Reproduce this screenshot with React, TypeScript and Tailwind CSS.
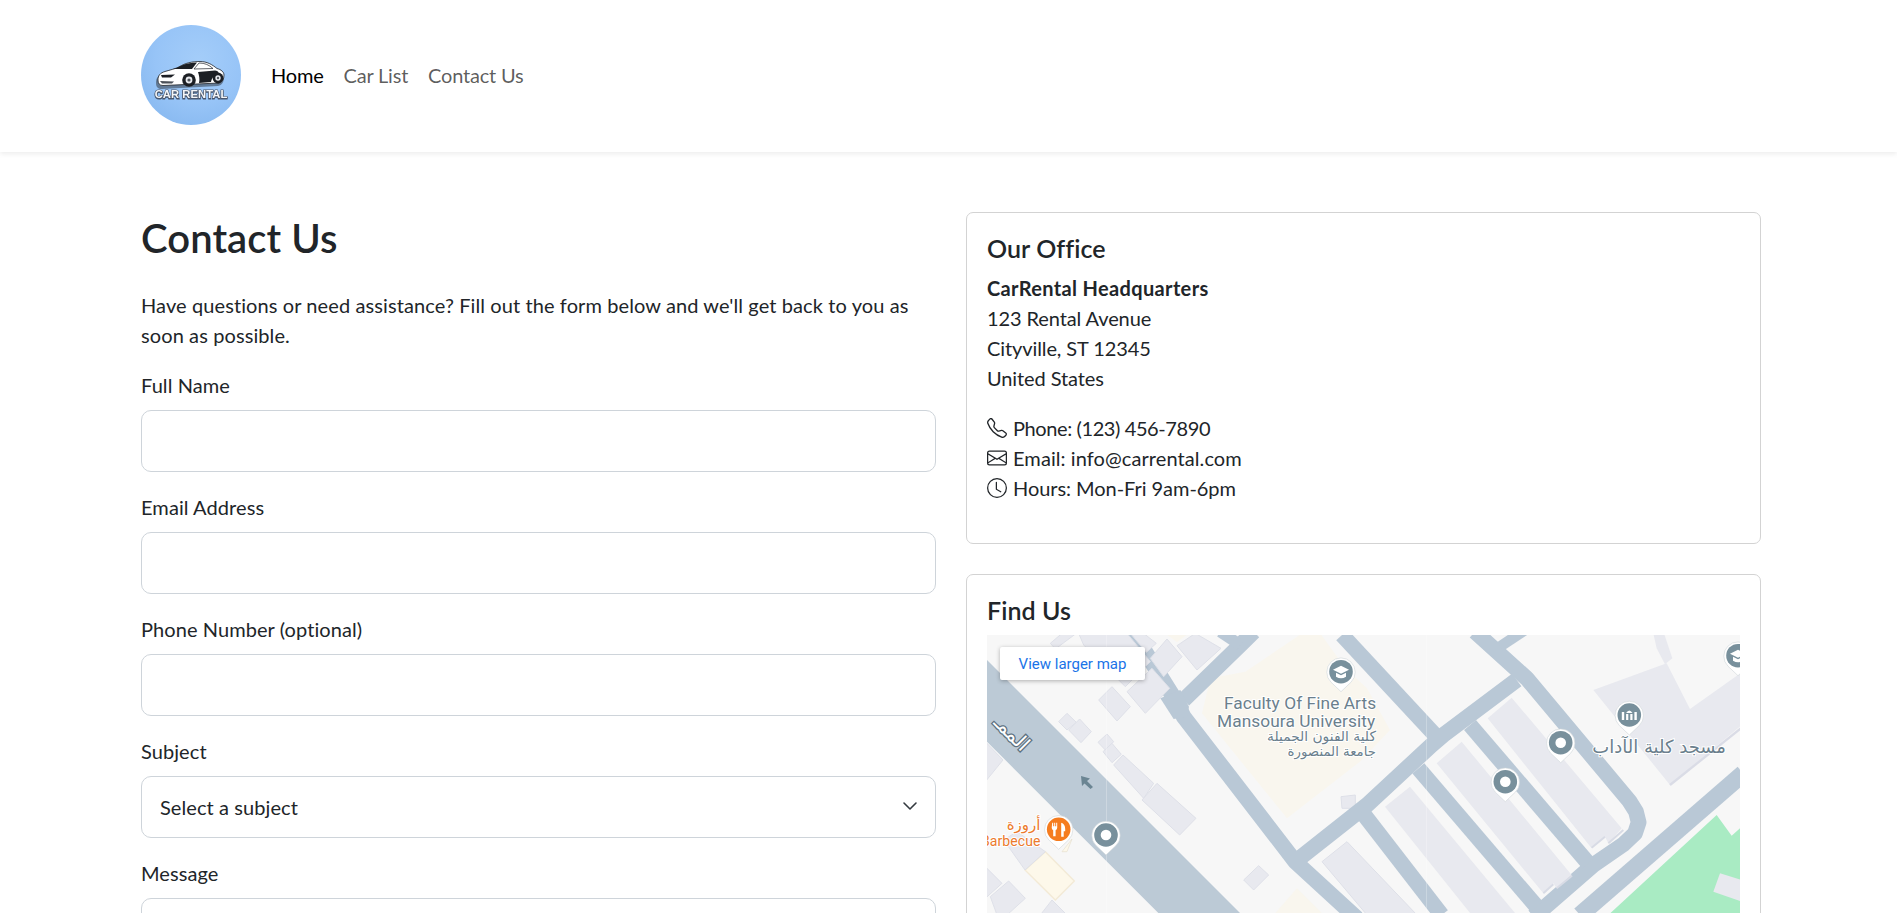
import React from "react";
import { BsTelephone, BsEnvelope, BsClock } from "react-icons/bs";

const poly = (pts: number[][]) => pts.map((p) => p.join(",")).join(" ");

const B8: number[][][] = [
  [[190, 25], [225, -5], [268, -5], [205, 42]],
  [[275, -5], [420, -5], [490, 80], [415, 155], [290, 30]],
  [[420, 170], [495, 100], [548, 160], [475, 235]],
  [[490, 70], [540, 12], [585, 65], [530, 125]],
  [[570, 32], [625, -5], [702, 40], [630, 105]],
  [[430, -5], [470, -5], [508, 25], [478, 52]],
  [[335, 195], [375, 155], [430, 215], [390, 258]],
  [[215, 260], [240, 235], [268, 262], [240, 285]],
  [[245, 285], [278, 252], [313, 290], [282, 323]],
  [[333, 322], [360, 297], [380, 320], [355, 345]],
  [[348, 350], [375, 325], [403, 358], [375, 383]],
  [[380, 390], [408, 360], [500, 445], [470, 490]],
  [[465, 495], [510, 445], [627, 550], [578, 600]],
  [[770, 735], [815, 692], [845, 720], [800, 765]],
  [[1062, 485], [1105, 480], [1105, 520], [1065, 520]],
  [[-5, 320], [48, 375], [-5, 440]],
  [[-5, 695], [45, 745], [-5, 790]],
  [[10, 785], [65, 738], [115, 790], [60, 840], [30, 840]],
  [[160, 840], [195, 795], [240, 840]],
  [[50, 615], [90, 590], [175, 650], [114, 705]],
  [[1005, 680], [1080, 620], [1290, 840], [1140, 840]],
];

const B9: number[][][] = [
  [[383, 250], [455, 188], [785, 580], [745, 625], [735, 605], [695, 640]],
  [[230, 385], [305, 320], [635, 720], [590, 760], [580, 745], [550, 775]],
  [[75, 515], [150, 455], [470, 840], [335, 840]],
  [[700, 165], [920, 85], [990, 222], [1145, 112], [1145, 270], [930, 450]],
  [[880, -5], [912, -5], [937, 70], [915, 88], [890, 40]],
  [[1060, 770], [1080, 715], [1145, 735], [1145, 800]],
];

const R8: number[][][] = [
  [[437, -10], [565, 195], [590, 245], [925, 680], [1110, 850]],
  [[590, 195], [760, 30], [800, -10]],
  [[700, -10], [760, 30]],
];

const R9: number[][][] = [
  [[-54, 0], [225, 300]],
  [[345, -10], [500, 130], [808, 498], [828, 530], [836, 562], [825, 595], [790, 628], [700, 690], [545, 825], [520, 845]],
  [[-194, 680], [21, 510], [215, 330], [250, 300], [470, 135]],
  [[330, 270], [685, 685]],
  [[175, 400], [530, 815]],
  [[5, 530], [245, 840]],
  [[660, 840], [1150, 415]],
];

function Pin({ x, y, fill = "#78909c", children }: { x: number; y: number; fill?: string; children?: React.ReactNode }) {
  return (
    <g transform={`translate(${x},${y})`}>
      <path d="M0,20 L-10,10.5 A14.2,14.2 0 1 1 10,10.5 Z" fill="#ffffff" stroke="#cfd5d9" strokeWidth="0.6" />
      <circle r="11.8" fill={fill} />
      {children ?? <circle r="5.3" fill="#ffffff" />}
    </g>
  );
}

const Cap = () => (
  <g fill="#ffffff">
    <path d="M-8,-2 L0,-6 L8,-2 L0,2 Z" />
    <path d="M-5,1 L0,3.5 L5,1 L5,5 Q0,8 -5,5 Z" />
  </g>
);

function MapArt() {
  return (
    <svg viewBox="0 0 753 450" width="753" height="450" className="block">
      <rect width="753" height="450" fill="#f7f7f7" />
      <g transform="scale(0.33333)">
        <polygon fill="#f9f6ee" points={poly([[645, 235], [670, 130], [775, 110], [945, -5], [1000, -5], [1075, 100], [1140, 160], [1209, 285], [1119, 380], [900, 550]])} />
        <polygon fill="#f9f6ee" points={poly([[860, 840], [930, 760], [1010, 840]])} />
        <polygon fill="#f9f6ee" points={poly([[535, -5], [570, 22], [605, -5]])} />
        <polygon fill="#fdf8ea" stroke="#f3ead6" strokeWidth="4" points={poly([[114, 705], [175, 650], [262, 738], [205, 795]])} />
        <polygon fill="#fdf8ea" stroke="#e6dfcf" strokeWidth="2" points={poly([[225, 650], [255, 612], [240, 650]])} />
        <polygon fill="#bccad6" points={poly([[-10, 65], [1285, 1360], [1040, 1360], [-10, 310]])} />
        {R8.map((r, i) => (
          <polyline key={i} points={poly(r)} fill="none" stroke="#b9c8d6" strokeWidth={i === 2 ? 34 : 47} strokeLinejoin="round" />
        ))}
        <polygon fill="#b9c8d6" points={poly([[520, 190], [580, 165], [606, 215], [600, 245], [560, 252]])} />
        {B8.map((p, i) => (
          <polygon key={i} points={poly(p)} fill="#e8e9ef" stroke="#dee0e8" strokeWidth="3" />
        ))}
      </g>
      <g transform="translate(373,0) scale(0.33333)">
        <polygon fill="#a9ebc3" points={poly([[745, 840], [1070, 540], [1115, 602], [1145, 575], [1145, 840]])} />
        {R9.map((r, i) => (
          <polyline key={i} points={poly(r)} fill="none" stroke="#b9c8d6" strokeWidth={i === 6 ? 52 : 47} strokeLinejoin="round" />
        ))}
        <polyline points={poly([[420, 35], [495, -15]])} fill="none" stroke="#b9c8d6" strokeWidth="32" />
        {B9.map((p, i) => (
          <polygon key={i} points={poly(p)} fill="#e8e9ef" />
        ))}
        <polyline points={poly([[930, 450], [1145, 278]])} fill="none" stroke="#dadce6" strokeWidth="7" />
        <polyline points={poly([[695, 638], [735, 605]])} fill="none" stroke="#d8dbe5" strokeWidth="6" />
        <polyline points={poly([[745, 625], [790, 585]])} fill="none" stroke="#d8dbe5" strokeWidth="6" />
        <polyline points={poly([[550, 775], [580, 748]])} fill="none" stroke="#d8dbe5" strokeWidth="6" />
        <polyline points={poly([[590, 760], [636, 722]])} fill="none" stroke="#d8dbe5" strokeWidth="6" />
      </g>
      <line x1="119.5" y1="0" x2="119.5" y2="450" stroke="#ffffff" strokeOpacity="0.25" strokeWidth="1" />
      <line x1="439.5" y1="0" x2="439.5" y2="450" stroke="#ffffff" strokeOpacity="0.25" strokeWidth="1" />

      <g fill="#6b7f8d" stroke="#ffffff" strokeWidth="2" className="font-['Roboto'] [paint-order:stroke]">
        <text x="237" y="74" fontSize="17.3">Faculty Of Fine Arts</text>
        <text x="230" y="92" fontSize="17.3">Mansoura University</text>
      </g>
      <g fill="#6b7f8d" stroke="#ffffff" strokeWidth="2" textAnchor="end" className="font-['DejaVu_Sans'] [paint-order:stroke]">
        <text x="389" y="106" fontSize="13.8">كلية الفنون الجميلة</text>
        <text x="389" y="120.5" fontSize="13.3">جامعة المنصورة</text>
        <text x="739" y="118" fontSize="18">مسجد كلية الآداب</text>
      </g>
      <g fill="#ec7a2c" stroke="#ffffff" strokeWidth="2" textAnchor="end" className="[paint-order:stroke]">
        <text x="53.5" y="195" fontSize="15" className="font-['DejaVu_Sans']">أروزة</text>
        <text x="53.5" y="211" fontSize="14" className="font-['Roboto']">Barbecue</text>
      </g>
      <text transform="translate(20,103) rotate(45)" textAnchor="middle" fontSize="20" fill="#ffffff" stroke="#5d7080" strokeWidth="2.6" className="font-['DejaVu_Sans'] [paint-order:stroke]">الممـ</text>
      <path d="M94,141 L103,143.5 L100,146 L106,152 L103.5,154 L97.5,148.5 L95,151 Z" fill="#6b8593" />

      <Pin x={119} y={200} />
      <Pin x={573.7} y={107.7} />
      <Pin x={518.3} y={146.7} />
      <Pin x={354} y={36.7}><Cap /></Pin>
      <Pin x={751} y={20.7}><Cap /></Pin>
      <Pin x={642.3} y={80}>
        <g fill="#ffffff">
          <rect x="-7.5" y="-3" width="2.4" height="8" />
          <rect x="5.1" y="-3" width="2.4" height="8" />
          <rect x="-3.2" y="-1" width="2.2" height="6" />
          <rect x="1" y="-1" width="2.2" height="6" />
          <path d="M-3.2,-2 Q0,-7 3.2,-2 Z" />
        </g>
      </Pin>
      <Pin x={71.7} y={194.3} fill="#f57c1f">
        <g fill="#ffffff">
          <path d="M-6.5,-6.5 h1 v3.5 h1 v-3.5 h1 v3.5 h1 v-3.5 h1 v5 q0,2 -1.6,2.4 v6.1 h-2.4 v-6.1 q-1.5,-.4 -1.5,-2.4 Z" />
          <path d="M2.5,7.5 V-6.5 Q6.5,-5.5 6.5,0 V2 H5 V7.5 Z" />
        </g>
      </Pin>
    </svg>
  );
}

function Logo() {
  return (
    <div className="w-[100px] h-[100px] rounded-full shrink-0 overflow-hidden bg-[radial-gradient(circle_at_58%_35%,#a4cdf9_0%,#97c4f7_50%,#80b3ec_100%)]">
      <svg viewBox="0 0 100 100" width="100" height="100">
        <path d="M16,56 C16,51 18,48 24,46.5 C29,45 35,43.5 38,42 C44,38 51,36.5 59,36.5 C66,36.5 71,39.5 76,43.5 C81,44.5 84,47 84,50 C84,55 82,58 78,59 L22,62 C18,62 16,60 16,56 Z" fill="#4a5a6c" fillOpacity="0.7" transform="translate(-1,2)" />
        <path d="M17,55 C17,50.5 19,48 24,46.5 C29,45 35,43.5 38,42 C44,38 51,36.5 59,36.5 C66,36.5 71,39.5 76,43.5 C80,44.5 83,47 83,50 C83,54 81.5,57 78,58 L22,60.5 C18.5,60.5 17,58.5 17,55 Z" fill="#ffffff" stroke="#1f2329" strokeWidth="0.8" />
        <path d="M32,44 C38,42.5 41,39.5 47,38.5 C50,38 53,37.5 56,37.5 L51,44 Z" fill="#1c1f24" />
        <path d="M53,44 L58,38 C64,38 68,40 72,43.5 Z" fill="#ffffff" stroke="#1f2329" strokeWidth="0.7" />
        <path d="M57,47 L74,45.5 C78,46 78,48 77,50 C74,50 71,52 70,57 L58,58 C59,54 58,50 57,47 Z" fill="#1c1f24" />
        <path d="M20,50 L34,49.5 L30,52.5 L21,52.5 Z" fill="#1c1f24" />
        <path d="M19,56 L33,56.5 L31,58.5 L21,58.5 Z" fill="#4b5058" />
        <circle cx="48" cy="55" r="6.8" fill="#1c1f24" />
        <circle cx="48" cy="55" r="3.4" fill="#e8eaee" />
        <circle cx="48" cy="55" r="1.6" fill="#50555c" />
        <circle cx="77" cy="53" r="5.4" fill="#1c1f24" />
        <circle cx="77" cy="53" r="2.7" fill="#e8eaee" />
        <circle cx="77" cy="53" r="1.2" fill="#50555c" />
        <text x="50" y="72.5" textAnchor="middle" fontSize="11.2" fontWeight="700" fill="#f4f6f8" stroke="#4a5568" strokeWidth="1.2" className="font-['Liberation_Sans'] [paint-order:stroke] drop-shadow-[0_1px_0_rgba(50,60,80,0.8)]">CAR RENTAL</text>
      </svg>
    </div>
  );
}

function Field({ label, type = "text" }: { label: string; type?: string }) {
  return (
    <div className="mb-5">
      <label className="block mb-2.5 h-[30px]">{label}</label>
      <input type={type} className="block w-full h-[62px] bg-white border border-[#ced4da] rounded-[10px] px-[18px] outline-none" />
    </div>
  );
}

export default function App() {
  return (
    <div className="h-screen overflow-hidden bg-white text-[#212529] text-[20px] leading-[30px] font-['Lato'] tracking-[0.08px]">
      <header className="h-[152px] bg-white shadow-[0_2px_5px_rgba(0,0,0,0.075)]">
        <nav className="ml-[141px] w-[1620px] h-full flex items-center pb-[2px]">
          <Logo />
          <ul className="flex ml-5 tracking-[-0.2px]">
            <li className="px-2.5 text-black">Home</li>
            <li className="px-2.5 text-black/65">Car List</li>
            <li className="px-2.5 text-black/65">Contact Us</li>
          </ul>
        </nav>
      </header>

      <main className="ml-[141px] w-[1620px] mt-[60px] grid grid-cols-2 gap-[30px]">
        <section>
          <h1 className="text-[40px] leading-[52px] font-semibold mb-[26px]">Contact Us</h1>
          <p className="mb-5 tracking-[0.1px]">Have questions or need assistance? Fill out the form below and we'll get back to you as soon as possible.</p>
          <form>
            <Field label="Full Name" />
            <Field label="Email Address" type="email" />
            <Field label="Phone Number (optional)" type="tel" />
            <div className="mb-5">
              <label className="block mb-2.5 h-[30px]">Subject</label>
              <div className="relative">
                <select defaultValue="" className="block w-full h-[62px] appearance-none bg-white border border-[#ced4da] rounded-[10px] pl-[18px] pr-12 outline-none">
                  <option value="">Select a subject</option>
                </select>
                <svg viewBox="0 0 16 16" width="16" height="16" className="absolute right-[18px] top-[22px] pointer-events-none">
                  <path d="m2 5 6 6 6-6" fill="none" stroke="#343a40" strokeWidth="1.6" strokeLinecap="round" strokeLinejoin="round" />
                </svg>
              </div>
            </div>
            <div>
              <label className="block mb-2.5 h-[30px]">Message</label>
              <textarea rows={5} className="block w-full bg-white border border-[#ced4da] rounded-[10px] px-[18px] py-[15px] outline-none" />
            </div>
          </form>
        </section>

        <section className="flex flex-col gap-[30px]">
          <div className="border border-[#d3d3d3] rounded-[7px] p-5">
            <h2 className="text-[25px] leading-[30px] font-semibold mb-2.5">Our Office</h2>
            <p className="mb-5 tracking-[-0.1px]"><strong className="font-bold tracking-[0.35px]">CarRental Headquarters</strong><br />123 Rental Avenue<br />Cityville, ST 12345<br />United States</p>
            <div className="mb-5">
              <div className="flex items-center gap-[6px]"><BsTelephone size={20} /><span className="tracking-[-0.4px]">Phone: (123) 456-7890</span></div>
              <div className="flex items-center gap-[6px]"><BsEnvelope size={20} />Email: info@carrental.com</div>
              <div className="flex items-center gap-[6px]"><BsClock size={20} /><span className="tracking-[-0.05px]">Hours: Mon-Fri 9am-6pm</span></div>
            </div>
          </div>
          <div className="border border-[#d3d3d3] rounded-[7px] p-5">
            <h2 className="text-[25px] leading-[30px] font-semibold mb-2.5">Find Us</h2>
            <div className="relative overflow-hidden h-[450px]">
              <MapArt />
              <a className="absolute left-[13px] top-[12px] w-[145px] h-[33px] bg-white rounded-[2px] shadow-[0_1px_4px_rgba(0,0,0,0.3)] flex items-center justify-center font-['Roboto'] text-[15px] tracking-normal text-[#1a73e8]">View larger map</a>
            </div>
          </div>
        </section>
      </main>
    </div>
  );
}
